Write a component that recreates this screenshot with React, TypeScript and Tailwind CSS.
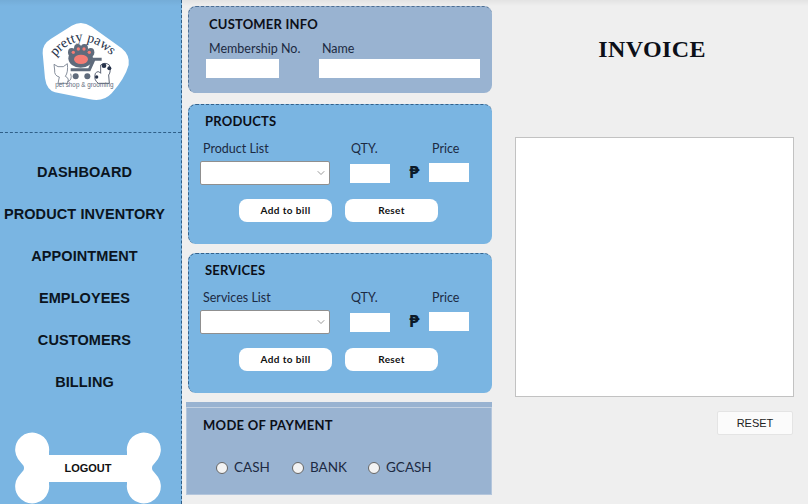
import React from 'react';
import { ChevronDown } from 'lucide-react';

const gothic = 'font-["Lato",sans-serif]';

function Logo() {
  return (
    <svg width="110" height="95" viewBox="0 0 330 285">
      <path d="M62 72 L125 32 Q155 15 185 35 L275 100 Q300 120 296 150 Q285 190 245 235 Q220 262 180 253 L75 232 Q50 225 45 190 L38 115 Q36 88 62 72 Z" fill="#fff" />
      <path id="logoArc" d="M78 124 Q150 36 242 120" fill="none" />
      <text fontFamily="Liberation Serif, serif" fontSize="42" fill="#26324a">
        <textPath href="#logoArc" startOffset="50%" textAnchor="middle">pretty paws</textPath>
      </text>
      {/* paw */}
      <ellipse cx="152" cy="130" rx="37" ry="28" fill="#5f6b7c" />
      <ellipse cx="125" cy="112" rx="11" ry="13" fill="#5f6b7c" />
      <ellipse cx="143" cy="100" rx="11" ry="13" fill="#5f6b7c" />
      <ellipse cx="163" cy="100" rx="11" ry="13" fill="#5f6b7c" />
      <ellipse cx="182" cy="112" rx="11" ry="13" fill="#5f6b7c" />
      <ellipse cx="153" cy="133" rx="21" ry="14" fill="#f47c74" />
      <circle cx="130" cy="112" r="5" fill="#f47c74" />
      <circle cx="145" cy="102" r="5" fill="#f47c74" />
      <circle cx="162" cy="102" r="5" fill="#f47c74" />
      <circle cx="178" cy="112" r="5" fill="#f47c74" />
      {/* cart */}
      <path d="M215 133 L192 133 L178 164 L122 164" fill="none" stroke="#5f6b7c" strokeWidth="9" />
      <circle cx="137" cy="184" r="9" fill="#5f6b7c" />
      <circle cx="172" cy="184" r="9" fill="#5f6b7c" />
      {/* cat */}
      <g fill="#fff" stroke="#6f7888" strokeWidth="2.5">
        <path d="M72 148 L74 165 Q72 182 88 186 L84 205 L112 205 Q120 190 106 184 Q115 172 112 146 L100 155 L84 155 Z" />
        <path d="M112 200 Q128 196 122 176" fill="none" />
      </g>
      {/* dog */}
      <g fill="#fff" stroke="#3c465a" strokeWidth="2.5">
        <path d="M205 205 Q190 195 196 175 Q205 165 212 175 L212 150 Q225 140 238 150 Q244 170 236 180 L238 205 Z" />
      </g>
      <circle cx="222" cy="152" r="7" fill="#26324a" />
      <circle cx="238" cy="160" r="6" fill="#26324a" />
      <circle cx="200" cy="186" r="5" fill="#26324a" />
      <text x="163" y="216" textAnchor="middle" fontFamily="Liberation Sans, sans-serif" fontSize="19" fill="#5f6b7c">pet shop &amp; grooming</text>
    </svg>
  );
}

function Bone() {
  return (
    <svg width="146" height="72" viewBox="0 0 146 72" className="absolute inset-0">
      <path d="M34 23 L112 23 L112 20 A17 17 0 1 1 143 27 C139 32.6 137 33 137 36 C137 39 139 39.4 143 45 A17 17 0 1 1 112 52 L112 50 L34 50 L34 52 A17 17 0 1 1 3 45 C7 39.4 9 39 9 36 C9 33 7 32.6 3 27 A17 17 0 1 1 34 20 Z" fill="#fff" />
    </svg>
  );
}

function Sidebar() {
  const items = ['DASHBOARD', 'PRODUCT INVENTORY', 'APPOINTMENT', 'EMPLOYEES', 'CUSTOMERS', 'BILLING'];
  return (
    <aside className="w-[182px] h-full shrink-0 flex flex-col bg-[#7ab5e2] border-r border-dashed border-[#2f5f88]">
      <div className="h-[133px] shrink-0 pt-[15px] pl-[30px] border-b border-dashed border-[#2f5f88]">
        <Logo />
      </div>
      <nav className="mt-[19px] pr-[12px] flex flex-col">
        {items.map((item) => (
          <a key={item} className='h-[42px] flex items-center justify-center whitespace-nowrap text-[14.5px] tracking-[0.1px] font-bold text-[#0b1420] font-["Liberation_Sans",sans-serif]'>
            {item}
          </a>
        ))}
      </nav>
      <div className="relative mt-[28px] ml-[15px] w-[146px] h-[72px]">
        <Bone />
        <button className='absolute inset-0 text-[11px] font-bold text-[#111] font-["Liberation_Sans",sans-serif]'>LOGOUT</button>
      </div>
    </aside>
  );
}

function Field({ className }: { className: string }) {
  return <input className={`bg-white outline-none ${className}`} />;
}

function CustomerInfo() {
  return (
    <section className="h-[87px] rounded-[8px] bg-[#99b3d1] border-t border-l border-dashed border-[#4d6f94] pt-[10px] pl-[17px]">
      <h2 className={`${gothic} ml-[3px] text-[13px] leading-[15px] font-bold tracking-[0.2px] text-[#0c0f18]`}>CUSTOMER INFO</h2>
      <div className={`${gothic} mt-[9px] flex text-[12.5px] leading-[15px] text-[#1c2a42]`}>
        <span className="ml-[3px] w-[113px]">Membership No.</span>
        <span>Name</span>
      </div>
      <div className="mt-[3px] flex">
        <Field className="w-[73px] h-[19px]" />
        <Field className="ml-[40px] w-[161px] h-[19px]" />
      </div>
    </section>
  );
}

function ItemPanel({ title, listLabel }: { title: string; listLabel: string }) {
  return (
    <section className="h-[140px] rounded-[8px] bg-[#7ab5e2] border-t border-l border-dashed border-[#35628c] pt-[9px] pl-[11px]">
      <h2 className={`${gothic} ml-[5px] text-[13px] leading-[15px] font-bold tracking-[0.2px] text-[#0c0f18]`}>{title}</h2>
      <div className={`${gothic} mt-[12px] flex text-[12.5px] leading-[15px] text-[#1c2a42]`}>
        <span className="ml-[3px] w-[148px]">{listLabel}</span>
        <span className="w-[81px]">QTY.</span>
        <span>Price</span>
      </div>
      <div className="mt-[5px] flex items-start">
        <div className="w-[130px] h-[24px] bg-white border border-[#8f8f8f] rounded-[2px] flex items-center justify-end pr-[2px]">
          <ChevronDown className="w-[12px] h-[12px] text-[#777]" strokeWidth={1.5} />
        </div>
        <Field className="ml-[20px] mt-[3px] w-[40px] h-[19px]" />
        <span className='ml-[19px] mt-[3px] w-[20px] text-[15px] leading-[19px] font-bold text-[#0c1a2a] font-["DejaVu_Sans",sans-serif]'>₱</span>
        <Field className="mt-[2px] w-[40px] h-[19px]" />
      </div>
      <div className="mt-[14px] ml-[39px] flex gap-[13px]">
        <button className={`${gothic} w-[93px] h-[23px] rounded-[8px] bg-white text-[10px] font-bold tracking-[0.4px] text-[#111]`}>Add to bill</button>
        <button className={`${gothic} w-[93px] h-[23px] rounded-[8px] bg-white text-[10px] font-bold tracking-[0.3px] text-[#111]`}>Reset</button>
      </div>
    </section>
  );
}

function Payment() {
  const modes = ['CASH', 'BANK', 'GCASH'];
  return (
    <section className="ml-[-2px] w-[306px] h-[93px] bg-[#99b3d1]">
      <div className="h-[5px] border-b border-[#c3d2e3] box-content" />
      <div className="border border-[#b4c6dc] border-t-0 h-[87px] pt-[10px] pl-[16px]">
        <h2 className={`${gothic} text-[13px] leading-[15px] font-bold tracking-[0.3px] text-[#0c0f18]`}>MODE OF PAYMENT</h2>
        <div className="mt-[27px] ml-[13px] flex">
          {modes.map((mode) => (
            <label key={mode} className={`w-[76px] flex items-center gap-[6px] ${gothic} text-[13.5px] leading-[15px] text-[#1c2a42]`}>
              <input type="radio" name="mode" className="appearance-none w-[12px] h-[12px] rounded-full bg-[#f3f3f3] border border-[#666]" />
              {mode}
            </label>
          ))}
        </div>
      </div>
    </section>
  );
}

export default function App() {
  return (
    <div className="relative w-[808px] h-[504px] flex overflow-hidden bg-[#efefef]">
      <Sidebar />
      <main className="w-[310px] shrink-0 pl-[6px] pt-[6px] flex flex-col">
        <CustomerInfo />
        <div className="mt-[11px]"><ItemPanel title="PRODUCTS" listLabel="Product List" /></div>
        <div className="mt-[9px]"><ItemPanel title="SERVICES" listLabel="Services List" /></div>
        <div className="mt-[9px]"><Payment /></div>
      </main>
      <div className="flex-1 flex flex-col pl-[23px]">
        <h1 className='mt-[35px] w-[274px] text-center text-[24px] leading-[28px] font-bold tracking-[0.4px] text-[#0c0f18] font-["Liberation_Serif",serif]'>INVOICE</h1>
        <textarea className="mt-[74px] w-[279px] h-[260px] bg-white border border-[#c2c2c2] outline-none resize-none" />
        <button className='mt-[14px] ml-[202px] w-[76px] h-[24px] bg-[#fbfbfb] border border-[#e4e4e4] rounded-[2px] text-[11px] text-[#222] font-["Liberation_Sans",sans-serif]'>RESET</button>
      </div>
      <div className="absolute inset-x-0 top-0 h-[6px] bg-gradient-to-b from-black/5 to-transparent pointer-events-none" />
    </div>
  );
}
